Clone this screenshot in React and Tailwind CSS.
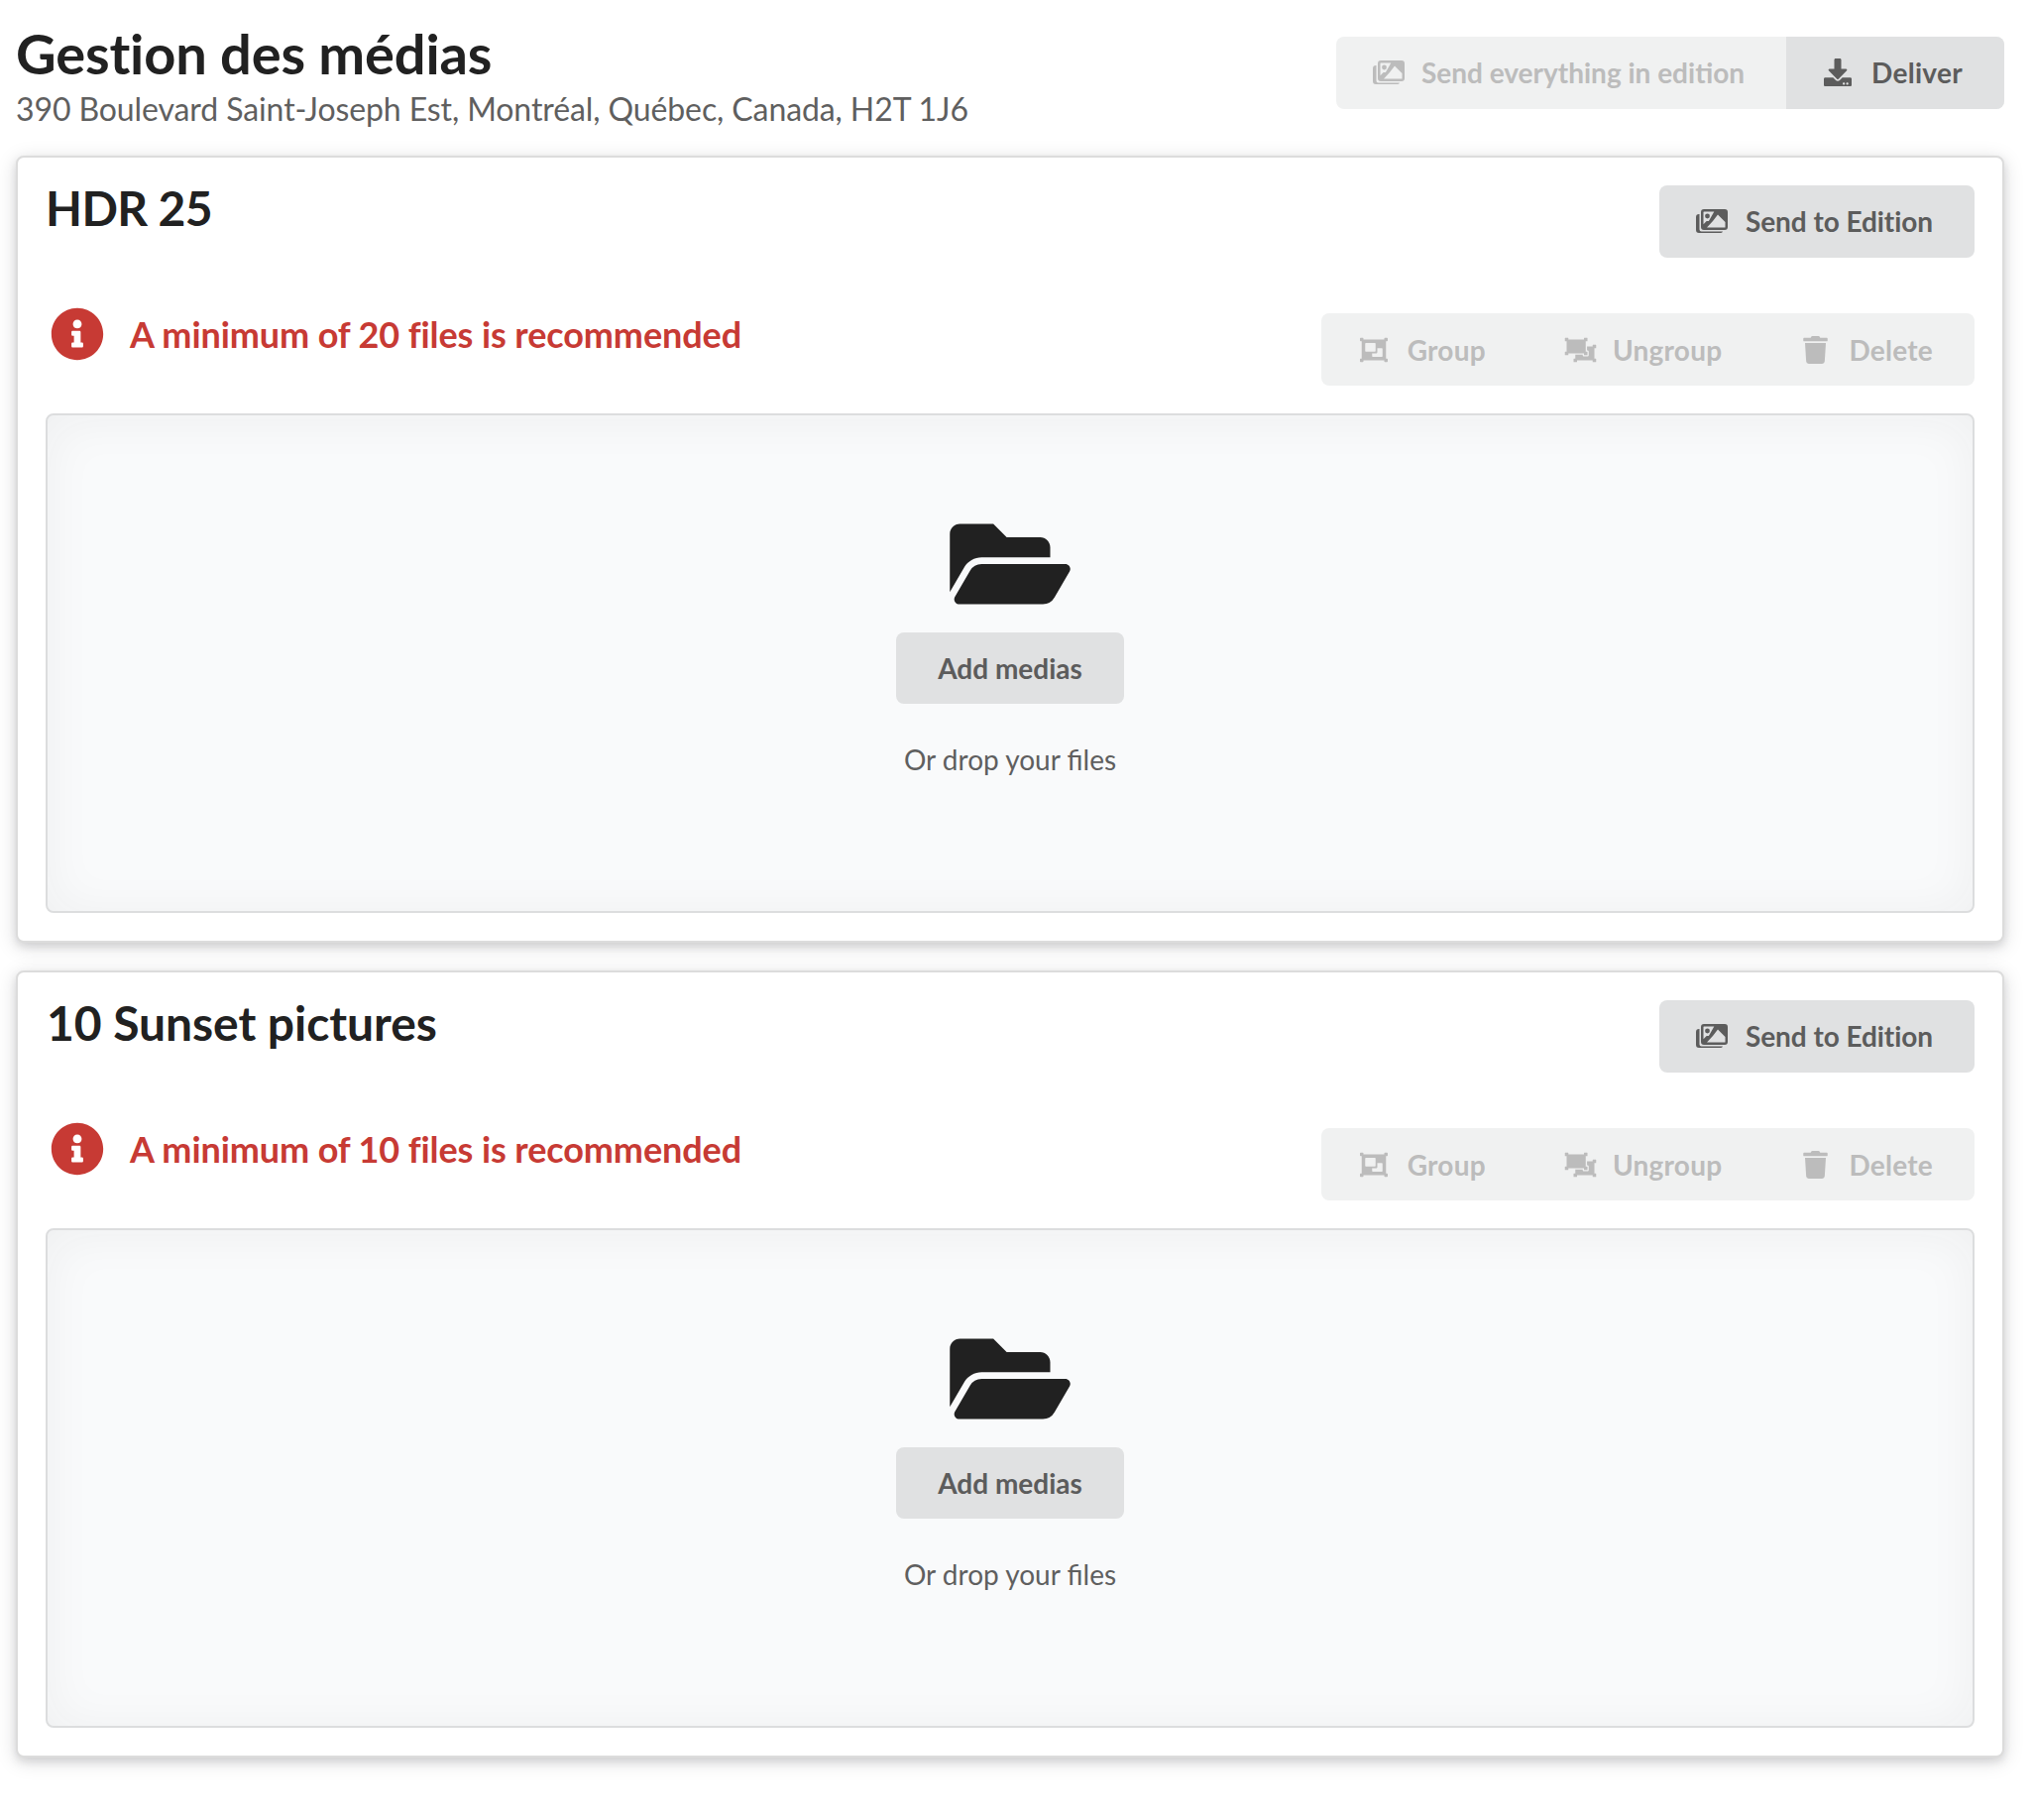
import React from "react";
import { FaDownload, FaObjectGroup, FaObjectUngroup, FaTrash, FaFolderOpen, FaInfoCircle } from "react-icons/fa";

function ImagesIcon({ className = "" }) {
  return (
    <svg viewBox="0 0 32 24" className={className} fill="currentColor" aria-hidden="true">
      <path d="M3 5h.5v15.5a2 2 0 0 0 2 2H27a2 2 0 0 1-2 1.5H3a3 3 0 0 1-3-3V8a3 3 0 0 1 3-3z" />
      <path
        fillRule="evenodd"
        d="M8 0h21a3 3 0 0 1 3 3v15a3 3 0 0 1-3 3H8a3 3 0 0 1-3-3V3a3 3 0 0 1 3-3zM8 2.5a.5.5 0 0 0-.5.5v12.2l3.2-3.2h2.2l5.4-9.5zM22 5.5 17 12l-6 6.5h18.3a.2.2 0 0 0 .2-.2V13z"
      />
      <circle cx="11.5" cy="7" r="2.4" />
    </svg>
  );
}

function Btn({ icon: Icon, iconClass, children, className = "" }) {
  return (
    <div className={`flex h-[73px] items-center pr-[42px] font-bold text-[28px] leading-none whitespace-nowrap ${className}`}>
      <span className="mr-[14px] flex w-[36px] justify-center"><Icon className={iconClass} /></span>
      {children}
    </div>
  );
}

function Card({ title, min, titleClass = "" }) {
  return (
    <section className="rounded-[8px] border-2 border-[#dcdcdc] bg-white px-[28px] pb-[28px] pt-[28px] shadow-[0_4px_8px_0_rgba(34,36,38,0.12),0_4px_20px_0_rgba(34,36,38,0.15)]">
      <div className="flex justify-between">
        <div>
          <h2 className={`text-[48px] font-bold leading-[46px] text-[#212121] ${titleClass}`}>{title}</h2>
          <div className="mt-[77px] flex items-center pl-[5px]">
            <FaInfoCircle className="h-[54px] w-[54px] text-[#c73a34]" />
            <span className="ml-[26px] text-[36px] font-bold leading-[54px] tracking-[-0.1px] text-[#c73a34]">A minimum of {min} files is recommended</span>
          </div>
        </div>
        <div className="flex flex-col items-end gap-[56px]">
          <Btn icon={ImagesIcon} iconClass="h-[24px] w-[32px] -translate-x-[2px]" className="rounded-[8px] bg-[#e0e1e2] pb-[2px] pl-[37px] tracking-[-0.06px] text-[#5c5c5c]">Send to Edition</Btn>
          <div className="flex rounded-[8px] bg-[#f0f1f1] tracking-[0.25px] text-[#bcbcbc]">
            <Btn icon={FaObjectGroup} iconClass="h-[28px] w-[28px] -translate-x-[2px]" className="pl-[37px]">Group</Btn>
            <Btn icon={FaObjectUngroup} iconClass="h-[28px] w-[35px]" className="pl-[36px]">Ungroup</Btn>
            <Btn icon={FaTrash} iconClass="h-[28px] w-[25px] -translate-x-[2px]" className="pl-[36px]">Delete</Btn>
          </div>
        </div>
      </div>
      <div className="mt-[28px] flex h-[504px] flex-col items-center rounded-[8px] border-2 border-[#dcddde] bg-[#f9fafb] pt-[96px] shadow-[inset_0_4px_50px_0_rgba(34,36,38,0.05)]">
        <FaFolderOpen className="h-[108px] w-[122px] text-[#212121]" />
        <div className="mt-[15px] flex h-[72px] items-center rounded-[8px] bg-[#e0e1e2] px-[42px] text-[28px] font-bold text-[#5c5c5c]">Add medias</div>
        <div className="mt-[36px] text-[28px] leading-[40px] text-[#5f5f5f]">Or drop your files</div>
      </div>
    </section>
  );
}

export default function App() {
  return (
    <div className="min-h-[1836px] bg-white pl-[16px] pr-[30px] pt-[19px] font-['Lato',sans-serif]">
      <header className="flex items-start justify-between">
        <div>
          <h1 className="text-[56px] font-bold leading-[70px] tracking-[-0.15px] text-[#212121]">Gestion des médias</h1>
          <p className="mt-[1px] text-[32px] leading-[40px] tracking-[-0.1px] text-[#5f5f5f]">390 Boulevard Saint-Joseph Est, Montréal, Québec, Canada, H2T 1J6</p>
        </div>
        <div className="mt-[18px] flex rounded-[8px] bg-[#f0f1f1]">
          <Btn icon={ImagesIcon} iconClass="h-[24px] w-[32px] -translate-x-[1px]" className="pb-[2px] pl-[36px] text-[#bcbcbc]">Send everything in edition</Btn>
          <Btn icon={FaDownload} iconClass="h-[28px] w-[28px] -translate-x-[2px]" className="rounded-r-[8px] bg-[#e0e1e2] pb-[2px] pl-[36px] tracking-[0.3px] text-[#5c5c5c]">Deliver</Btn>
        </div>
      </header>
      <div className="mt-[27px] flex flex-col gap-[28px]">
        <Card title="HDR 25" min={20} titleClass="tracking-[-0.6px]" />
        <Card title="10 Sunset pictures" min={10} titleClass="pl-[1px] tracking-[-0.06px]" />
      </div>
    </div>
  );
}
